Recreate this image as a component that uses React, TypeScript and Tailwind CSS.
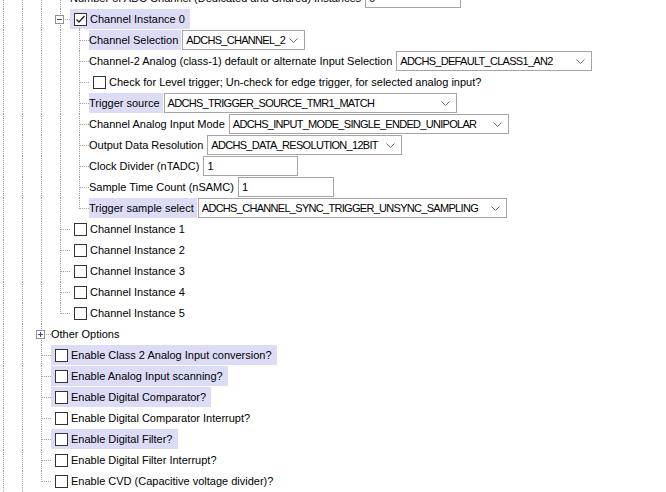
import React from "react";

type Line = "full" | "end" | "none";

type Field =
  | { kind: "select"; value: string; w: string }
  | { kind: "input"; value: string; w: string };

interface Row {
  level: number;
  // state of each ancestor column line (0..level-1)
  cols: Line[];
  // own connector: tee / corner / expander
  conn: "tee" | "end" | "minus" | "plus";
  check?: boolean | "checked";
  label: string;
  hl?: boolean;
  field?: Field;
  childLine?: boolean;
}

const full4: Line[] = ["full", "full", "full", "full"];
const full3: Line[] = ["full", "full", "full"];
const full2: Line[] = ["full", "full"];

const rows: Row[] = [
  { level: 3, cols: full3, conn: "tee", label: "Number of ADC Channel (Dedicated and Shared) Instances", field: { kind: "input", value: "6", w: "w-[96px]" } },
  { level: 3, cols: full3, conn: "minus", check: "checked", label: "Channel Instance 0", hl: true, childLine: true },
  { level: 4, cols: full4, conn: "tee", label: "Channel Selection", hl: true, field: { kind: "select", value: "ADCHS_CHANNEL_2", w: "w-[123px]" } },
  { level: 4, cols: full4, conn: "tee", label: "Channel-2 Analog (class-1) default or alternate Input Selection", field: { kind: "select", value: "ADCHS_DEFAULT_CLASS1_AN2", w: "w-[196px]" } },
  { level: 4, cols: full4, conn: "tee", check: true, label: "Check for Level trigger; Un-check for edge trigger, for selected analog input?" },
  { level: 4, cols: full4, conn: "tee", label: "Trigger source", hl: true, field: { kind: "select", value: "ADCHS_TRIGGER_SOURCE_TMR1_MATCH", w: "w-[293px]" } },
  { level: 4, cols: full4, conn: "tee", label: "Channel Analog Input Mode", field: { kind: "select", value: "ADCHS_INPUT_MODE_SINGLE_ENDED_UNIPOLAR", w: "w-[280px]" } },
  { level: 4, cols: full4, conn: "tee", label: "Output Data Resolution", field: { kind: "select", value: "ADCHS_DATA_RESOLUTION_12BIT", w: "w-[195px]" } },
  { level: 4, cols: full4, conn: "tee", label: "Clock Divider (nTADC)", field: { kind: "input", value: "1", w: "w-[95px]" } },
  { level: 4, cols: full4, conn: "tee", label: "Sample Time Count (nSAMC)", field: { kind: "input", value: "1", w: "w-[96px]" } },
  { level: 4, cols: full4, conn: "end", label: "Trigger sample select", hl: true, field: { kind: "select", value: "ADCHS_CHANNEL_SYNC_TRIGGER_UNSYNC_SAMPLING", w: "w-[309px]" } },
  { level: 3, cols: full3, conn: "tee", check: true, label: "Channel Instance 1" },
  { level: 3, cols: full3, conn: "tee", check: true, label: "Channel Instance 2" },
  { level: 3, cols: full3, conn: "tee", check: true, label: "Channel Instance 3" },
  { level: 3, cols: full3, conn: "tee", check: true, label: "Channel Instance 4" },
  { level: 3, cols: full3, conn: "end", check: true, label: "Channel Instance 5" },
  { level: 2, cols: full2, conn: "plus", label: "Other Options" },
  { level: 2, cols: full2, conn: "tee", check: true, label: "Enable Class 2 Analog Input conversion?", hl: true },
  { level: 2, cols: full2, conn: "tee", check: true, label: "Enable Analog Input scanning?", hl: true },
  { level: 2, cols: full2, conn: "tee", check: true, label: "Enable Digital Comparator?", hl: true },
  { level: 2, cols: full2, conn: "tee", check: true, label: "Enable Digital Comparator Interrupt?" },
  { level: 2, cols: full2, conn: "tee", check: true, label: "Enable Digital Filter?", hl: true },
  { level: 2, cols: full2, conn: "tee", check: true, label: "Enable Digital Filter Interrupt?" },
  { level: 2, cols: full2, conn: "end", check: true, label: "Enable CVD (Capacitive voltage divider)?" },
];

const Checkbox = ({ checked }: { checked?: boolean }) => (
  <div className="w-[13px] h-[13px] border border-[#333333] bg-white shrink-0 flex items-center justify-center">
    {checked && (
      <svg width="11" height="11" viewBox="0 0 11 11">
        <polyline points="1.5,5.5 4,8 9.5,2" fill="none" stroke="#222222" strokeWidth="1.3" />
      </svg>
    )}
  </div>
);

const Expander = ({ plus }: { plus?: boolean }) => (
  <div className="absolute left-[-2px] top-[6px] w-[9px] h-[9px] border border-[#919191] bg-white flex items-center justify-center">
    <div className="relative w-[5px] h-[5px]">
      <div className="absolute left-0 top-[2px] w-[5px] h-[1px] bg-[#2f4a8a]" />
      {plus && <div className="absolute left-[2px] top-0 w-[1px] h-[5px] bg-[#2f4a8a]" />}
    </div>
  </div>
);

const Chevron = () => (
  <svg width="9" height="5" viewBox="0 0 9 5" className="shrink-0">
    <polyline points="0.5,0.5 4.5,4.5 8.5,0.5" fill="none" stroke="#6d6d6d" strokeWidth="1" />
  </svg>
);

const FieldBox = ({ field }: { field: Field }) => (
  <div className={`${field.w} h-[20px] border border-[#a5a5a5] bg-white flex items-center pl-[3px] pr-[6px] ml-[1px] shrink-0`}>
    <span className="flex-1 whitespace-nowrap tracking-[-0.7px]">{field.value}</span>
    {field.kind === "select" && <Chevron />}
  </div>
);

const TreeRow = ({ row, first }: { row: Row; first?: boolean }) => {
  const content = (
    <>
      {row.check !== undefined && (
        <div className="pl-[4px] pr-[3px] h-[20px] flex items-center">
          <Checkbox checked={row.check === "checked"} />
        </div>
      )}
      <span className={row.check !== undefined ? "pr-[5px]" : "pr-[3px]"}>{row.label}</span>
    </>
  );
  return (
    <div className={`relative flex h-[21px] shrink-0 ${first ? "mt-[-12px]" : ""}`}>
      {row.cols.map((c, i) => (
        <div key={i} className="relative w-[19px] h-full shrink-0">
          {c === "full" && <div className="absolute left-[3px] top-0 bottom-0 border-l border-dotted border-[#a0a0a0]" />}
        </div>
      ))}
      <div className="relative w-[13px] h-full shrink-0">
        {row.conn === "end" ? (
          <div className="absolute left-[3px] top-0 h-[11px] border-l border-dotted border-[#a0a0a0]" />
        ) : (
          <div className="absolute left-[3px] top-0 bottom-0 border-l border-dotted border-[#a0a0a0]" />
        )}
        <div className="absolute left-[4px] right-0 top-[10px] border-t border-dotted border-[#a0a0a0]" />
        {(row.conn === "minus" || row.conn === "plus") && <Expander plus={row.conn === "plus"} />}
      </div>
      {row.childLine && (
        <div className="absolute left-[79px] top-[19px] bottom-0 border-l border-dotted border-[#a0a0a0]" />
      )}
      <div className="flex items-start h-[21px] whitespace-nowrap">
        <div className={`flex items-center h-[20px] leading-[20px] ${row.hl ? "bg-[#dcdcf6]" : ""}`}>{content}</div>
        {row.field && <FieldBox field={row.field} />}
      </div>
    </div>
  );
};

export default function App() {
  return (
    <div
      className="w-[666px] h-[492px] overflow-hidden bg-white text-black text-[11px] flex flex-col"
      style={{ fontFamily: '"Liberation Sans", Arial, sans-serif' }}
    >
      {rows.map((r, i) => (
        <TreeRow key={i} row={r} first={i === 0} />
      ))}
    </div>
  );
}
